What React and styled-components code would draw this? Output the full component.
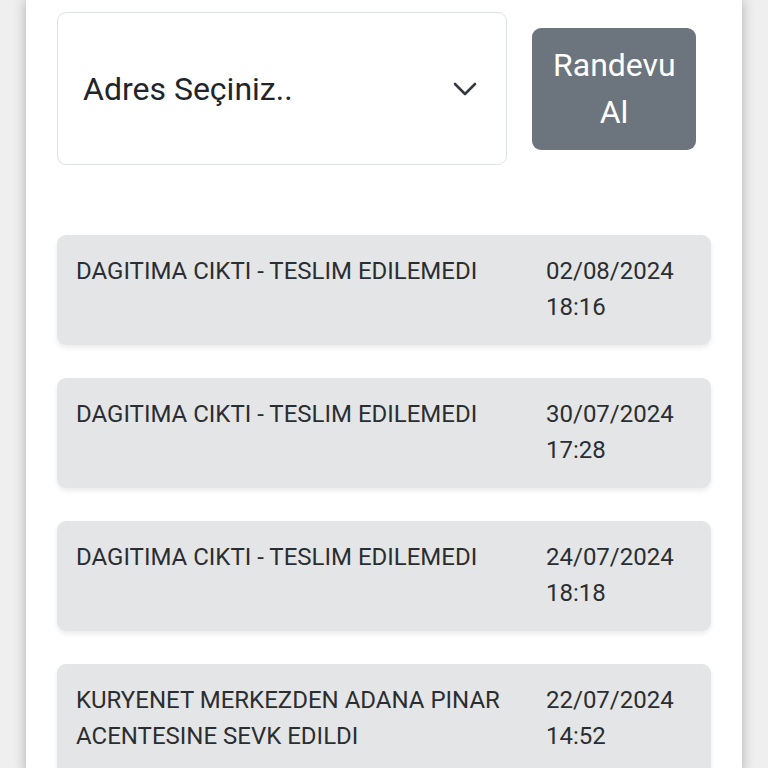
import * as React from "react";
import styled, { createGlobalStyle } from "styled-components";

//Global styles

const GlobalStyle = createGlobalStyle`
  html, body {
    margin: 0;
    padding: 0;
    background: #efefef;
    font-family: Roboto, "Noto Sans", "Liberation Sans", sans-serif;
    color: #212529;
  }
`;

//Page card

const Page = styled.div`
  width: 716px;
  margin-left: 26px;
  min-height: 768px;
  background: #fff;
  box-shadow: 0 0 12px rgba(0, 0, 0, 0.28);
  padding: 12px 31px 0;
  box-sizing: border-box;
`;

//Address select + button

const TopRow = styled.div`
  display: flex;
  align-items: center;
  gap: 25px;
`;

const Select = styled.div`
  width: 450px;
  height: 153px;
  box-sizing: border-box;
  border: 1px solid #dee2e6;
  border-radius: 9px;
  display: flex;
  align-items: center;
  justify-content: space-between;
  padding: 0 29px 0 25px;
  font-size: 32px;
  color: #212529;
`;

const Button = styled.button`
  width: 164px;
  height: 122px;
  border: none;
  border-radius: 9px;
  background: #6c757d;
  color: #fff;
  font-family: inherit;
  font-size: 32px;
  line-height: 47px;
  padding: 0 21px;
`;

//Shipment history

const List = styled.div`
  margin-top: 70px;
  display: flex;
  flex-direction: column;
  gap: 33px;
`;

const Item = styled.div`
  display: grid;
  grid-template-columns: 450px 1fr;
  column-gap: 20px;
  min-height: 110px;
  box-sizing: border-box;
  padding: 18px 19px 17px;
  background: #e4e5e7;
  border-radius: 9px;
  box-shadow: 0 3px 5px rgba(0, 0, 0, 0.08);
  font-size: 24px;
  line-height: 36px;
  color: #2b2e31;
`;

const Status = styled.div``;

const When = styled.div``;

const Chevron = () => (
  <svg width="24" height="14" viewBox="0 0 24 14" fill="none">
    <path
      d="M2 2l10 10L22 2"
      stroke="#343a40"
      strokeWidth="2.6"
      strokeLinecap="round"
      strokeLinejoin="round"
    />
  </svg>
);

const history = [
  { text: "DAGITIMA CIKTI - TESLIM EDILEMEDI", date: "02/08/2024", time: "18:16" },
  { text: "DAGITIMA CIKTI - TESLIM EDILEMEDI", date: "30/07/2024", time: "17:28" },
  { text: "DAGITIMA CIKTI - TESLIM EDILEMEDI", date: "24/07/2024", time: "18:18" },
  {
    text: "KURYENET MERKEZDEN ADANA PINAR ACENTESINE SEVK EDILDI",
    date: "22/07/2024",
    time: "14:52",
  },
];

export default function App() {
  return (
    <>
      <GlobalStyle />
      <Page>
        <TopRow>
          <Select>
            <span>Adres Seçiniz..</span>
            <Chevron />
          </Select>
          <Button>Randevu Al</Button>
        </TopRow>
        <List>
          {history.map((h, i) => (
            <Item key={i}>
              <Status>{h.text}</Status>
              <When>
                {h.date}
                <br />
                {h.time}
              </When>
            </Item>
          ))}
        </List>
      </Page>
    </>
  );
}
